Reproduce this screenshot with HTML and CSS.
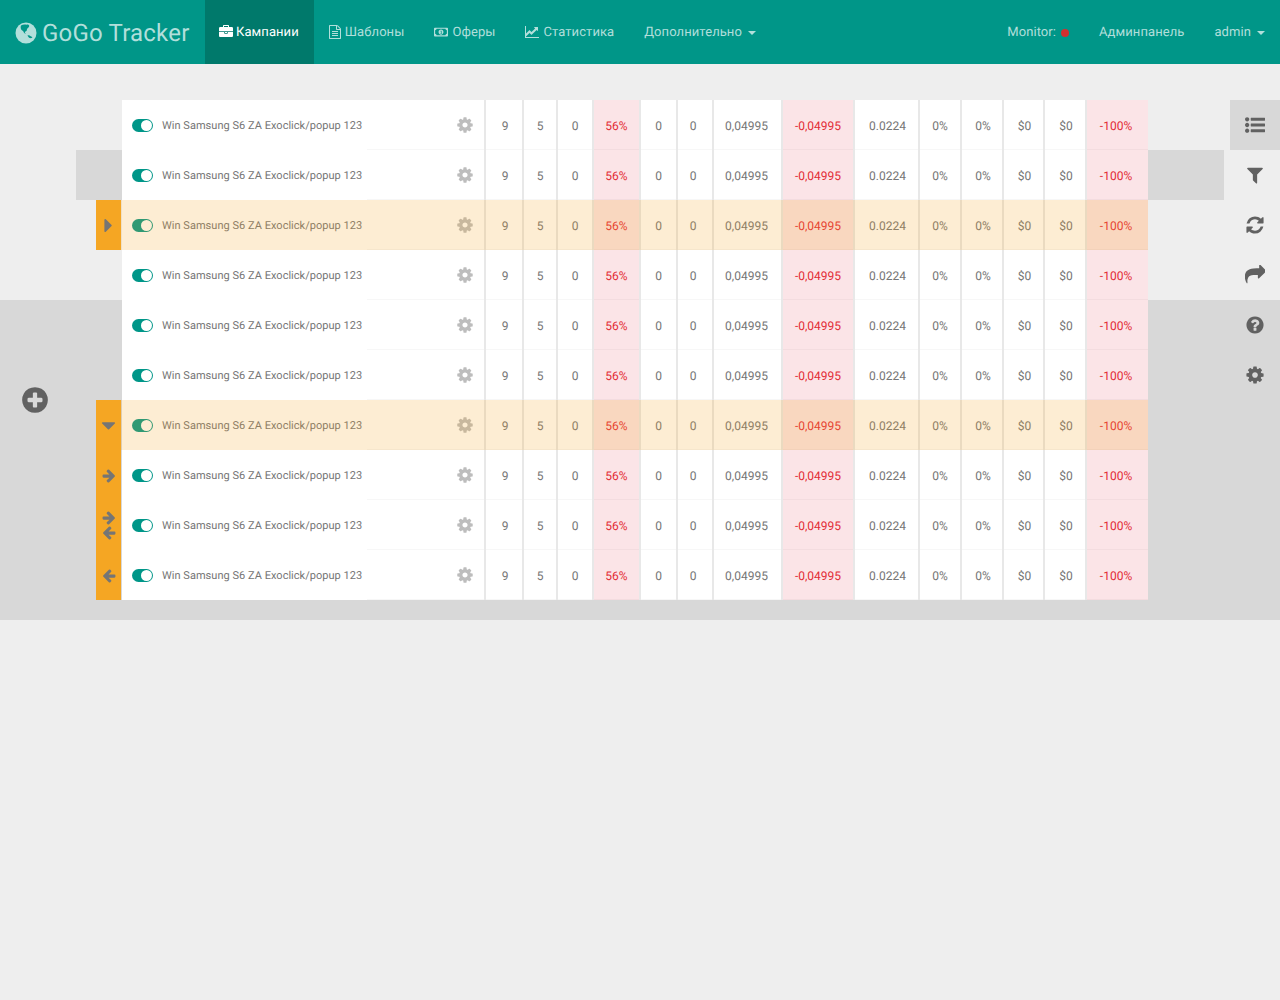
FILE: index.html
```html
<!DOCTYPE html>
<html lang="en">
<head>
    <meta charset="UTF-8">
    <title>GoGo Tracker</title>
    <link rel="stylesheet" href="styles.css">
</head>
<body>
    <!-- icon set -->
    <svg class="defs" xmlns="http://www.w3.org/2000/svg">
        <symbol id="i-cog" viewBox="0 0 1792 1792"><path d="M1152 896q0-106-75-181t-181-75-181 75-75 181 75 181 181 75 181-75 75-181zm512-109v222q0 12-8 23t-20 13l-185 28q-19 54-39 91 35 50 107 138 10 12 10 25t-9 23q-27 37-99 108t-94 71q-12 0-26-9l-138-108q-44 23-91 38-16 136-29 186-7 28-36 28h-222q-14 0-24.500-8.500t-11.500-21.500l-28-184q-49-16-90-37l-141 107q-10 9-25 9-14 0-25-11-126-114-165-168-7-10-7-23 0-12 8-23 15-21 51-66.500t54-70.500q-27-50-41-99l-183-27q-13-2-21-12.500t-8-23.500v-222q0-12 8-23t19-13l186-28q14-46 39-92-40-57-107-138-10-12-10-24 0-10 9-23 26-36 98.500-107.500t94.500-71.500q13 0 26 10l138 107q44-23 91-38 16-136 29-186 7-28 36-28h222q14 0 24.500 8.500t11.500 21.500l28 184q49 16 90 37l142-107q9-9 24-9 13 0 25 10 129 119 165 170 7 8 7 22 0 12-8 23-15 21-51 66.500t-54 70.500q26 50 41 98l183 28q13 2 21 12.500t8 23.500z"/></symbol>
        <symbol id="i-plus" viewBox="0 0 1792 1792"><path d="M1344 960v-128q0-26-19-45t-45-19h-256v-256q0-26-19-45t-45-19h-128q-26 0-45 19t-19 45v256h-256q-26 0-45 19t-19 45v128q0 26 19 45t45 19h256v256q0 26 19 45t45 19h128q26 0 45-19t19-45v-256h256q26 0 45-19t19-45zm320-64q0 209-103 385.500t-279.500 279.500-385.500 103-385.500-103-279.500-279.500-103-385.500 103-385.500 279.500-279.500 385.500-103 385.500 103 279.500 279.500 103 385.500z"/></symbol>
        <symbol id="i-right" viewBox="0 0 1792 1792"><path d="M1600 960q0 54-37 91l-651 651q-39 37-91 37-51 0-90-37l-75-75q-38-38-38-91t38-91l293-293h-704q-52 0-84.500-37.500t-32.500-90.500v-128q0-53 32.500-90.500t84.500-37.500h704l-293-294q-38-36-38-90t38-90l75-75q38-38 90-38 53 0 91 38l651 651q37 35 37 90z"/></symbol>
        <symbol id="i-left" viewBox="0 0 1792 1792"><path d="M1664 896v128q0 53-32.500 90.500t-84.500 37.500h-704l293 294q38 36 38 90t-38 90l-75 76q-37 37-90 37-52 0-91-37l-651-652q-37-37-37-90 0-52 37-91l651-650q38-38 91-38 52 0 90 38l75 74q38 38 38 91t-38 91l-293 293h704q52 0 84.500 37.500t32.500 90.500z"/></symbol>
        <symbol id="i-caret-right" viewBox="0 0 1792 1792"><path d="M1152 896q0 26-19 45l-448 448q-19 19-45 19t-45-19-19-45v-896q0-26 19-45t45-19 45 19l448 448q19 19 19 45z"/></symbol>
        <symbol id="i-caret-down" viewBox="0 0 1792 1792"><path d="M1408 704q0 26-19 45l-448 448q-19 19-45 19t-45-19l-448-448q-19-19-19-45t19-45 45-19h896q26 0 45 19t19 45z"/></symbol>
        <symbol id="i-filter" viewBox="0 0 1792 1792"><path d="M1595 295q17 41-14 70l-493 493v742q0 42-39 59-13 5-25 5-27 0-45-19l-256-256q-19-19-19-45v-486l-493-493q-31-29-14-70 17-39 59-39h1280q42 0 59 39z"/></symbol>
        <symbol id="i-refresh" viewBox="0 0 1792 1792"><path d="M1639 1056q0 5-1 7-64 268-268 434.500t-478 166.500q-146 0-282.500-55t-243.500-157l-129 129q-19 19-45 19t-45-19-19-45v-448q0-26 19-45t45-19h448q26 0 45 19t19 45-19 45l-137 137q71 66 161 102t187 36q134 0 250-65t186-179q11-17 53-117 8-23 30-23h192q13 0 22.500 9.500t9.500 22.500zm25-800v448q0 26-19 45t-45 19h-448q-26 0-45-19t-19-45 19-45l138-138q-148-137-349-137-134 0-250 65t-186 179q-11 17-53 117-8 23-30 23h-199q-13 0-22.500-9.500t-9.500-22.500v-7q65-268 270-434.500t480-166.500q146 0 284 55.500t245 156.500l130-129q19-19 45-19t45 19 19 45z"/></symbol>
        <symbol id="i-share" viewBox="0 0 1792 1792"><path d="M1792 640q0 26-19 45l-512 512q-19 19-45 19t-45-19-19-45v-256h-224q-98 0-175.500 6t-154 21.500-133 42.500-105.500 69.500-77 100-50 136-16 178q0 58 5 129l2 22q0 17-10 29t-28 12-28-14q-10-11-20-29-9-17-19-39t-17-34q-15-34-27-58-91-214-91-383 0-208 53.500-348.500t153-221 237-131 330-72.500 289-23h224v-256q0-26 19-45t45-19 45 19l512 512q19 19 19 45z"/></symbol>
        <symbol id="i-question" viewBox="0 0 1792 1792"><path d="M1024 1376v-192q0-14-9-23t-23-9h-192q-14 0-23 9t-9 23v192q0 14 9 23t23 9h192q14 0 23-9t9-23zm256-672q0-88-55.500-163t-138.500-116-170-41q-243 0-371 213-15 24 8 42l132 100q7 6 19 6 16 0 25-12 53-68 86-92 34-24 86-24 48 0 85.500 26t37.500 59q0 38-20 61t-68 45q-63 28-115.500 86.500t-52.500 125.500v36q0 14 9 23t23 9h192q14 0 23-9t9-23q0-19 21.500-49.500t54.500-49.500q32-18 49-28.500t46-35 44.500-48 28-60.500 12.500-81zm384 192q0 209-103 385.500t-279.500 279.500-385.500 103-385.500-103-279.500-279.500-103-385.500 103-385.500 279.500-279.500 385.500-103 385.500 103 279.500 279.500 103 385.500z"/></symbol>
        <symbol id="i-list" viewBox="0 0 1792 1792"><path d="M384 1408q0 80-56 136t-136 56-136-56-56-136 56-136 136-56 136 56 56 136zm0-512q0 80-56 136t-136 56-136-56-56-136 56-136 136-56 136 56 56 136zm1408 416v192q0 13-9.500 22.500t-22.500 9.500h-1216q-13 0-22.500-9.500t-9.500-22.500v-192q0-13 9.500-22.500t22.500-9.500h1216q13 0 22.500 9.500t9.500 22.500zm-1408-928q0 80-56 136t-136 56-136-56-56-136 56-136 136-56 136 56 56 136zm1408 416v192q0 13-9.500 22.500t-22.500 9.500h-1216q-13 0-22.500-9.500t-9.500-22.500v-192q0-13 9.500-22.500t22.500-9.500h1216q13 0 22.500 9.500t9.500 22.500zm0-512v192q0 13-9.500 22.500t-22.500 9.500h-1216q-13 0-22.500-9.500t-9.500-22.500v-192q0-13 9.500-22.500t22.500-9.500h1216q13 0 22.500 9.500t9.500 22.500z"/></symbol>
        <symbol id="i-briefcase" viewBox="0 0 1792 1792"><path d="M640 256h512v-128h-512v128zm1152 640v480q0 66-47 113t-113 47h-1472q-66 0-113-47t-47-113v-480h672v160q0 26 19 45t45 19h320q26 0 45-19t19-45v-160h672zm-768 0v128h-256v-128h256zm768-480v384h-1792v-384q0-66 47-113t113-47h352v-160q0-40 28-68t68-28h576q40 0 68 28t28 68v160h352q66 0 113 47t47 113z"/></symbol>
        <symbol id="i-file" viewBox="0 0 1792 1792"><path d="M1596 380q28 28 48 76t20 88v1152q0 40-28 68t-68 28h-1344q-40 0-68-28t-28-68v-1600q0-40 28-68t68-28h896q40 0 88 20t76 48zm-444-244v376h376q-10-29-22-41l-313-313q-12-12-41-22zm384 1528v-1024h-416q-40 0-68-28t-28-68v-416h-768v1536h1280zm-1024-864q0-14 9-23t23-9h704q14 0 23 9t9 23v64q0 14-9 23t-23 9h-704q-14 0-23-9t-9-23v-64zm736 224q14 0 23 9t9 23v64q0 14-9 23t-23 9h-704q-14 0-23-9t-9-23v-64q0-14 9-23t23-9h704zm0 256q14 0 23 9t9 23v64q0 14-9 23t-23 9h-704q-14 0-23-9t-9-23v-64q0-14 9-23t23-9h704z"/></symbol>
        <symbol id="i-money" viewBox="0 0 16 16"><path fill-rule="evenodd" d="M1 3h14a1 1 0 0 1 1 1v8a1 1 0 0 1-1 1H1a1 1 0 0 1-1-1V4a1 1 0 0 1 1-1zm2 1.300a2 2 0 0 1-1.700 1.700v4A2 2 0 0 1 3 11.700h10a2 2 0 0 1 1.700-1.700V6A2 2 0 0 1 13 4.300zM8 5c1.700 0 2.800 1.300 2.800 3S9.700 11 8 11 5.200 9.700 5.200 8 6.300 5 8 5zM7.400 6.500v.9h.5v1.900h-.6v.7h1.900v-.7h-.5V6.500z"/></symbol>
        <symbol id="i-chart" viewBox="0 0 1792 1792"><path d="M1792 1536v128h-1792v-1536h128v1408h1664zm-128-1248v435q0 21-19.500 29.500t-35.500-7.500l-121-121-633 633q-10 10-23 10t-23-10l-233-233-416 416-192-192 585-585q10-10 23-10t23 10l233 233 464-464-121-121q-16-16-7.500-35.500t29.500-19.500h435q14 0 23 9t9 23z"/></symbol>
        <symbol id="i-globe" viewBox="0 0 22 22"><circle cx="11" cy="11" r="10.500" fill="#b2dfdb"/><path fill="#009688" d="M6 3.500c1.500-1 3-1.300 4.500-1 .8.300 1.500 0 2.500 0 1.200.4 1.500 1.300 1 2.200-.3 1-1.300 1.200-1.800 2-.5.800-.1 1.600-.8 2.300-.6.500-1.200.4-1.500 1.100-.2.800.4 1.300 1.100 1.700-1-.1-2-.9-2.400-1.900-.4-1-1.300-1-2-1.800C5.800 7 5.300 5 6 3.500zM12.500 13.500c1-.4 2.400 0 3.200.7.700.6 1.300.6 1.700 1.200-.8.700-1.700 1-2.600.7-1-.3-1.800-1.500-2.300-2.600z"/></symbol>
    </svg>

    <nav class="navbar">
        <a class="brand"><svg class="brand-icon"><use href="#i-globe"/></svg>GoGo Tracker</a>
        <a class="nav-link active"><svg class="nav-icon"><use href="#i-briefcase"/></svg>Кампании</a>
        <a class="nav-link"><svg class="nav-icon"><use href="#i-file"/></svg>Шаблоны</a>
        <a class="nav-link"><svg class="nav-icon wide"><use href="#i-money"/></svg>Оферы</a>
        <a class="nav-link"><svg class="nav-icon wide"><use href="#i-chart"/></svg>Статистика</a>
        <a class="nav-link">Дополнительно<span class="caret"></span></a>
        <a class="nav-link push">Monitor:<span class="dot"></span></a>
        <a class="nav-link">Админпанель</a>
        <a class="nav-link">admin<span class="caret"></span></a>
    </nav>

    <main class="page">
        <div class="band band-short"></div>
        <div class="band band-wide"></div>
        <div class="add-btn"><svg class="add-icon"><use href="#i-plus"/></svg></div>

        <div class="table">
            <div class="row">
                <div class="mark none"></div>
                <div class="name"><span class="toggle"></span>Win Samsung S6 ZA Exoclick/popup 123</div>
                <div class="gear"><svg class="gear-icon"><use href="#i-cog"/></svg></div>
                <div class="cell">9</div><div class="cell">5</div><div class="cell">0</div><div class="cell bad">56%</div><div class="cell">0</div><div class="cell">0</div><div class="cell">0,04995</div><div class="cell bad">-0,04995</div><div class="cell">0.0224</div><div class="cell">0%</div><div class="cell">0%</div><div class="cell">$0</div><div class="cell">$0</div><div class="cell bad">-100%</div>
            </div>
            <div class="row">
                <div class="mark none"></div>
                <div class="name"><span class="toggle"></span>Win Samsung S6 ZA Exoclick/popup 123</div>
                <div class="gear"><svg class="gear-icon"><use href="#i-cog"/></svg></div>
                <div class="cell">9</div><div class="cell">5</div><div class="cell">0</div><div class="cell bad">56%</div><div class="cell">0</div><div class="cell">0</div><div class="cell">0,04995</div><div class="cell bad">-0,04995</div><div class="cell">0.0224</div><div class="cell">0%</div><div class="cell">0%</div><div class="cell">$0</div><div class="cell">$0</div><div class="cell bad">-100%</div>
            </div>
            <div class="row selected">
                <div class="mark"><svg class="mark-caret"><use href="#i-caret-right"/></svg></div>
                <div class="name"><span class="toggle"></span>Win Samsung S6 ZA Exoclick/popup 123</div>
                <div class="gear"><svg class="gear-icon"><use href="#i-cog"/></svg></div>
                <div class="cell">9</div><div class="cell">5</div><div class="cell">0</div><div class="cell bad">56%</div><div class="cell">0</div><div class="cell">0</div><div class="cell">0,04995</div><div class="cell bad">-0,04995</div><div class="cell">0.0224</div><div class="cell">0%</div><div class="cell">0%</div><div class="cell">$0</div><div class="cell">$0</div><div class="cell bad">-100%</div>
            </div>
            <div class="row">
                <div class="mark none"></div>
                <div class="name"><span class="toggle"></span>Win Samsung S6 ZA Exoclick/popup 123</div>
                <div class="gear"><svg class="gear-icon"><use href="#i-cog"/></svg></div>
                <div class="cell">9</div><div class="cell">5</div><div class="cell">0</div><div class="cell bad">56%</div><div class="cell">0</div><div class="cell">0</div><div class="cell">0,04995</div><div class="cell bad">-0,04995</div><div class="cell">0.0224</div><div class="cell">0%</div><div class="cell">0%</div><div class="cell">$0</div><div class="cell">$0</div><div class="cell bad">-100%</div>
            </div>
            <div class="row">
                <div class="mark none"></div>
                <div class="name"><span class="toggle"></span>Win Samsung S6 ZA Exoclick/popup 123</div>
                <div class="gear"><svg class="gear-icon"><use href="#i-cog"/></svg></div>
                <div class="cell">9</div><div class="cell">5</div><div class="cell">0</div><div class="cell bad">56%</div><div class="cell">0</div><div class="cell">0</div><div class="cell">0,04995</div><div class="cell bad">-0,04995</div><div class="cell">0.0224</div><div class="cell">0%</div><div class="cell">0%</div><div class="cell">$0</div><div class="cell">$0</div><div class="cell bad">-100%</div>
            </div>
            <div class="row">
                <div class="mark none"></div>
                <div class="name"><span class="toggle"></span>Win Samsung S6 ZA Exoclick/popup 123</div>
                <div class="gear"><svg class="gear-icon"><use href="#i-cog"/></svg></div>
                <div class="cell">9</div><div class="cell">5</div><div class="cell">0</div><div class="cell bad">56%</div><div class="cell">0</div><div class="cell">0</div><div class="cell">0,04995</div><div class="cell bad">-0,04995</div><div class="cell">0.0224</div><div class="cell">0%</div><div class="cell">0%</div><div class="cell">$0</div><div class="cell">$0</div><div class="cell bad">-100%</div>
            </div>
            <div class="row selected">
                <div class="mark"><svg class="mark-caret"><use href="#i-caret-down"/></svg></div>
                <div class="name"><span class="toggle"></span>Win Samsung S6 ZA Exoclick/popup 123</div>
                <div class="gear"><svg class="gear-icon"><use href="#i-cog"/></svg></div>
                <div class="cell">9</div><div class="cell">5</div><div class="cell">0</div><div class="cell bad">56%</div><div class="cell">0</div><div class="cell">0</div><div class="cell">0,04995</div><div class="cell bad">-0,04995</div><div class="cell">0.0224</div><div class="cell">0%</div><div class="cell">0%</div><div class="cell">$0</div><div class="cell">$0</div><div class="cell bad">-100%</div>
            </div>
            <div class="row">
                <div class="mark"><svg class="mark-arrow"><use href="#i-right"/></svg></div>
                <div class="name"><span class="toggle"></span>Win Samsung S6 ZA Exoclick/popup 123</div>
                <div class="gear"><svg class="gear-icon"><use href="#i-cog"/></svg></div>
                <div class="cell">9</div><div class="cell">5</div><div class="cell">0</div><div class="cell bad">56%</div><div class="cell">0</div><div class="cell">0</div><div class="cell">0,04995</div><div class="cell bad">-0,04995</div><div class="cell">0.0224</div><div class="cell">0%</div><div class="cell">0%</div><div class="cell">$0</div><div class="cell">$0</div><div class="cell bad">-100%</div>
            </div>
            <div class="row">
                <div class="mark"><svg class="mark-arrow"><use href="#i-right"/></svg><svg class="mark-arrow"><use href="#i-left"/></svg></div>
                <div class="name"><span class="toggle"></span>Win Samsung S6 ZA Exoclick/popup 123</div>
                <div class="gear"><svg class="gear-icon"><use href="#i-cog"/></svg></div>
                <div class="cell">9</div><div class="cell">5</div><div class="cell">0</div><div class="cell bad">56%</div><div class="cell">0</div><div class="cell">0</div><div class="cell">0,04995</div><div class="cell bad">-0,04995</div><div class="cell">0.0224</div><div class="cell">0%</div><div class="cell">0%</div><div class="cell">$0</div><div class="cell">$0</div><div class="cell bad">-100%</div>
            </div>
            <div class="row">
                <div class="mark"><svg class="mark-arrow"><use href="#i-left"/></svg></div>
                <div class="name"><span class="toggle"></span>Win Samsung S6 ZA Exoclick/popup 123</div>
                <div class="gear"><svg class="gear-icon"><use href="#i-cog"/></svg></div>
                <div class="cell">9</div><div class="cell">5</div><div class="cell">0</div><div class="cell bad">56%</div><div class="cell">0</div><div class="cell">0</div><div class="cell">0,04995</div><div class="cell bad">-0,04995</div><div class="cell">0.0224</div><div class="cell">0%</div><div class="cell">0%</div><div class="cell">$0</div><div class="cell">$0</div><div class="cell bad">-100%</div>
            </div>
        </div>

        <aside class="tools">
            <div class="tool active"><svg class="tool-icon"><use href="#i-list"/></svg></div>
            <div class="tool"><svg class="tool-icon"><use href="#i-filter"/></svg></div>
            <div class="tool"><svg class="tool-icon"><use href="#i-refresh"/></svg></div>
            <div class="tool"><svg class="tool-icon"><use href="#i-share"/></svg></div>
            <div class="tool"><svg class="tool-icon"><use href="#i-question"/></svg></div>
            <div class="tool"><svg class="tool-icon"><use href="#i-cog"/></svg></div>
        </aside>
    </main>
</body>
</html>
```

FILE: styles.css
```css
body {
    margin: 0;
    background: #eeeeee;
    font-family: Roboto, Arial, sans-serif;
    color: #757575;
    text-rendering: geometricPrecision;
}

.defs {
    display: none;
}

/* top bar */
.navbar {
    display: flex;
    height: 64px;
    background: #009688;
    color: #b2dfdb;
}

.brand {
    display: flex;
    align-items: center;
    width: 190px;
    height: 62px;
    padding: 2px 0 0 15px;
    font-size: 24px;
    letter-spacing: 0.2px;
}

.brand-icon {
    width: 22px;
    height: 22px;
    margin-right: 5px;
}

.nav-link {
    display: flex;
    align-items: center;
    padding: 0 15px;
    font-size: 13px;
    letter-spacing: 0.08px;
}

.nav-link.active {
    background: #00796b;
    color: #fff;
}

.nav-link.push {
    margin-left: auto;
}

.nav-icon {
    width: 14px;
    height: 14px;
    margin-left: -1px;
    margin-right: 3px;
    fill: currentColor;
}

.nav-icon.wide {
    margin-left: 0;
    margin-right: 4px;
}

.caret {
    width: 0;
    height: 0;
    margin-left: 6px;
    margin-top: 2px;
    border-top: 4px solid currentColor;
    border-left: 4px solid transparent;
    border-right: 4px solid transparent;
}

.dot {
    width: 8px;
    height: 8px;
    margin-left: 5px;
    margin-top: 2px;
    border-radius: 50%;
    background: #d32f2f;
}

/* page */
.page {
    position: relative;
    display: flex;
    padding: 36px 0 20px;
}

.band {
    position: absolute;
    background: #d8d8d8;
}

.band-short {
    top: 86px;
    left: 76px;
    width: 1148px;
    height: 50px;
}

.band-wide {
    top: 236px;
    bottom: 0;
    left: 0;
    right: 0;
}

.add-btn {
    position: absolute;
    top: 321px;
    left: 20px;
}

.add-icon {
    display: block;
    width: 30px;
    height: 30px;
    fill: #616161;
}

/* table */
.table {
    position: relative;
    margin-left: 96px;
    font-size: 12px;
}

.row {
    position: relative;
    display: grid;
    grid-template-columns: 25px 1px 245px 118px 38px 34px 36px 47px 37px 36px 69px 72px 65px 42px 42px 41px 42px 62px;
    height: 50px;
}

.row.selected::after {
    content: "";
    position: absolute;
    top: 0;
    bottom: 0;
    left: 25px;
    right: 0;
    background: rgba(245, 166, 35, 0.2);
    pointer-events: none;
}

.mark {
    grid-column: 1 / 3;
    display: flex;
    flex-direction: column;
    align-items: center;
    justify-content: center;
    width: 25px;
    background: #f5a623;
}

.mark.none {
    background: none;
}

.mark-caret {
    width: 23px;
    height: 23px;
    fill: #757575;
}

.mark-arrow {
    width: 16px;
    height: 15px;
    fill: #757575;
}

.name {
    display: flex;
    align-items: center;
    padding-left: 10px;
    background: #fff;
    font-size: 11px;
    letter-spacing: 0.03px;
    white-space: nowrap;
}

.toggle {
    display: flex;
    justify-content: flex-end;
    align-items: center;
    box-sizing: border-box;
    width: 21px;
    height: 13px;
    margin-right: 9px;
    padding-right: 1px;
    border-radius: 7px;
    background: #009688;
}

.toggle::after {
    content: "";
    width: 11px;
    height: 11px;
    border-radius: 50%;
    background: #fff;
}

.gear {
    display: flex;
    align-items: center;
    justify-content: flex-end;
    padding-right: 11px;
    background: #fff;
    box-shadow: inset 0 -1px rgba(0, 0, 0, 0.03);
}

.gear-icon {
    width: 18px;
    height: 18px;
    fill: #bdbdbd;
}

.cell {
    display: flex;
    align-items: center;
    justify-content: center;
    padding-top: 1px;
    background: #fff;
    box-shadow: -1px 0 #e8e8e8, inset 1px 0 #e8e8e8, inset 0 -1px rgba(0, 0, 0, 0.03);
}

.cell.bad {
    background: #fbe4e7;
    color: #e32b35;
}

/* small nudges so the values sit where the columns want them */
.cell:nth-child(4),
.cell:nth-child(12),
.cell:nth-child(14),
.cell:nth-child(15),
.cell:nth-child(16) {
    padding-left: 2px;
}

.cell:nth-child(9) {
    padding-right: 4px;
}

.cell:nth-child(10) {
    padding-right: 2px;
}

.cell:nth-child(17) {
    padding-right: 2px;
}

/* right side tools */
.tools {
    display: flex;
    flex-direction: column;
    position: relative;
    width: 50px;
    margin-left: auto;
}

.tool {
    display: flex;
    align-items: center;
    justify-content: center;
    height: 50px;
}

.tool.active {
    background: #d8d8d8;
}

.tool-icon {
    width: 20px;
    height: 20px;
    fill: #616161;
}
```
